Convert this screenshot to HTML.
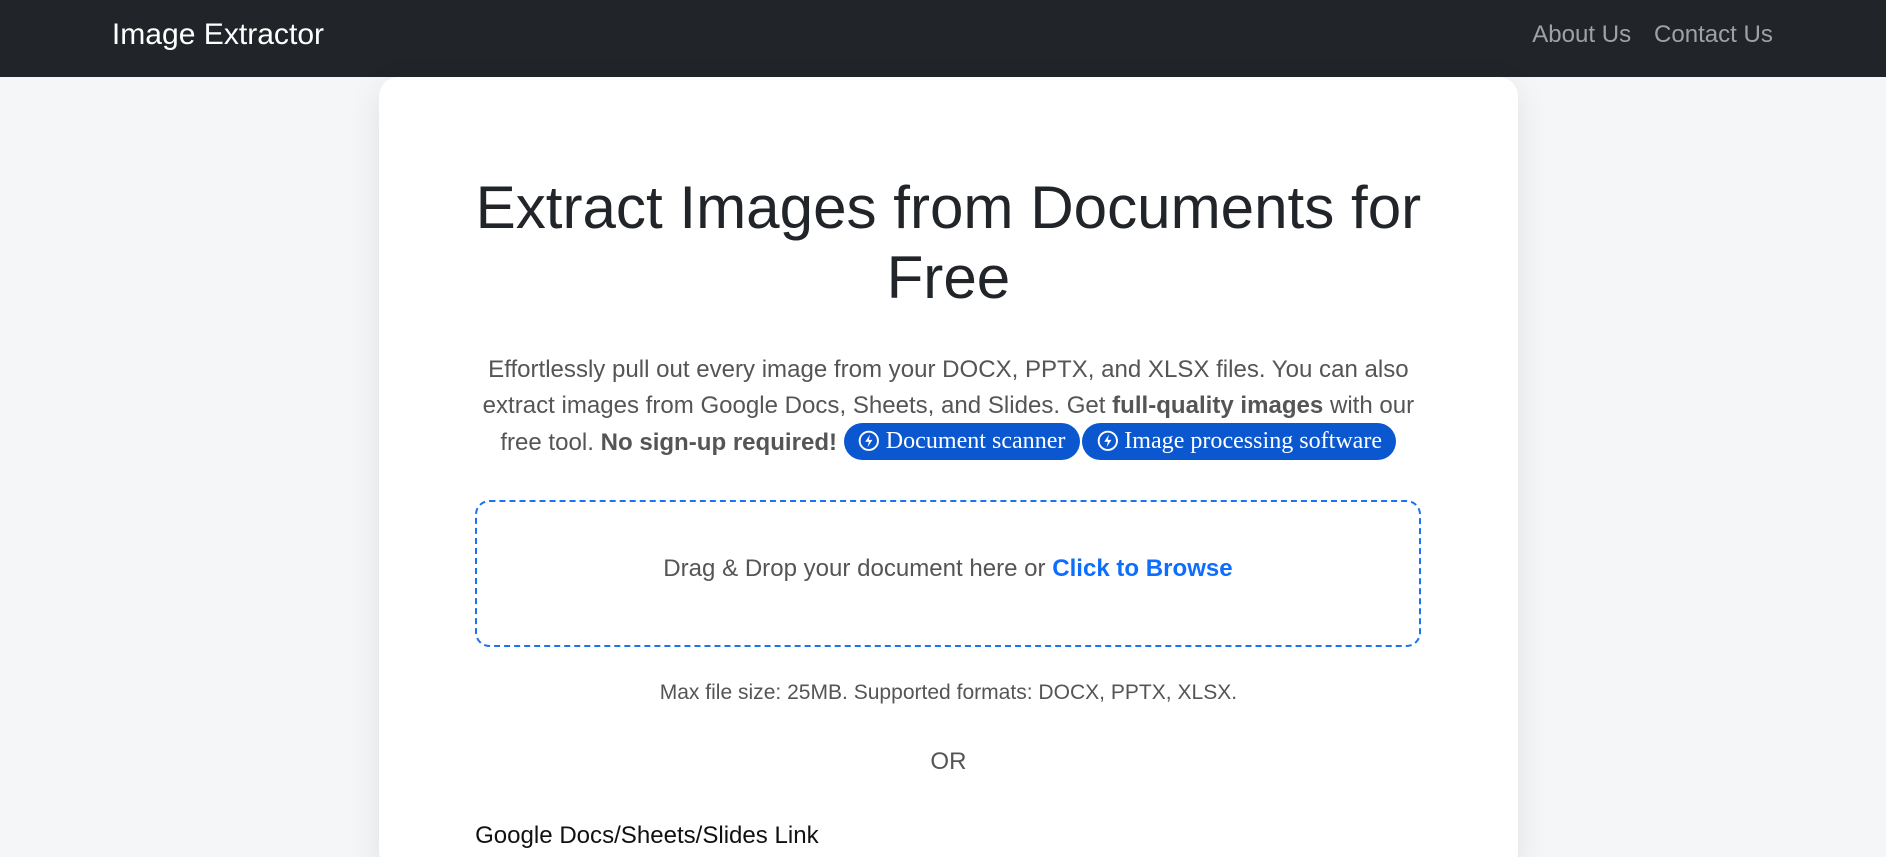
<!DOCTYPE html>
<html><head><meta charset="utf-8">
<style>
html,body{margin:0;padding:0;overflow:hidden;}
html{height:857px;}
body{zoom:1.2028;width:1568px;height:712px;overflow:hidden;background:#f5f6f8;font-family:"Liberation Sans",Arial,sans-serif;position:relative;}
.nav{height:64px;background:#212529;position:relative;}
.brand{position:absolute;left:93px;top:14px;font-size:25px;color:#fff;line-height:30px;}
.links{position:absolute;right:94px;top:16px;font-size:20px;color:#9fa1a4;line-height:26px;}
.links span{margin-left:19px;}
.card{position:absolute;left:315px;top:64px;width:947px;height:660px;background:#fff;border-radius:16px;box-shadow:0 8px 28px rgba(0,0,0,.09);}
h1{margin:0;position:absolute;left:50px;right:50px;top:80px;font-weight:400;font-size:50px;line-height:58px;text-align:center;color:#212529;}
.p{position:absolute;left:70px;right:70px;top:229px;font-size:20px;line-height:30px;text-align:center;color:#555;}
.p b{color:#555;}
.btn{display:inline-block;background:#0b57d0;color:#fff;font-family:"Liberation Serif",serif;font-size:20px;line-height:31px;height:31px;border-radius:16px;padding:0 12px 0 12px;vertical-align:middle;margin-top:-3px;}
.btn svg{vertical-align:-3px;margin-right:5px;}
.drop{position:absolute;left:80px;top:352px;width:783px;height:119px;border:2px dashed #1a73f0;border-radius:12px;text-align:center;font-size:20px;line-height:112px;color:#555;}
.drop b{color:#0d6efd;}
.max{position:absolute;left:0;right:0;top:502px;text-align:center;font-size:17.5px;color:#555;}
.or{position:absolute;left:0;right:0;top:558px;text-align:center;font-size:20px;color:#555;}
.lbl{position:absolute;left:80px;top:619px;font-size:20px;color:#111;}
</style></head><body>
<div class="nav"><div class="brand">Image Extractor</div><div class="links"><span>About Us</span><span>Contact Us</span></div></div>
<div class="card">
<h1>Extract Images from Documents for Free</h1>
<div class="p">Effortlessly pull out every image from your DOCX, PPTX, and XLSX files. You can also extract images from Google Docs, Sheets, and Slides. Get <b>full-quality images</b> with our free tool. <b>No sign-up required!</b> <span class="btn"><svg width="18" height="18" viewBox="0 0 18 18"><circle cx="9" cy="9" r="7.6" fill="none" stroke="#fff" stroke-width="1.6"/><path d="M10 3.8 L6 9.8 H9 L8 14.2 L12 8.2 H9 Z" fill="#fff"/></svg>Document scanner</span><span class="btn" style="margin-left:2px"><svg width="18" height="18" viewBox="0 0 18 18"><circle cx="9" cy="9" r="7.6" fill="none" stroke="#fff" stroke-width="1.6"/><path d="M10 3.8 L6 9.8 H9 L8 14.2 L12 8.2 H9 Z" fill="#fff"/></svg>Image processing software</span></div>
<div class="drop">Drag &amp; Drop your document here or <b>Click to Browse</b></div>
<div class="max">Max file size: 25MB. Supported formats: DOCX, PPTX, XLSX.</div>
<div class="or">OR</div>
<div class="lbl">Google Docs/Sheets/Slides Link</div>
</div>
</body></html>
